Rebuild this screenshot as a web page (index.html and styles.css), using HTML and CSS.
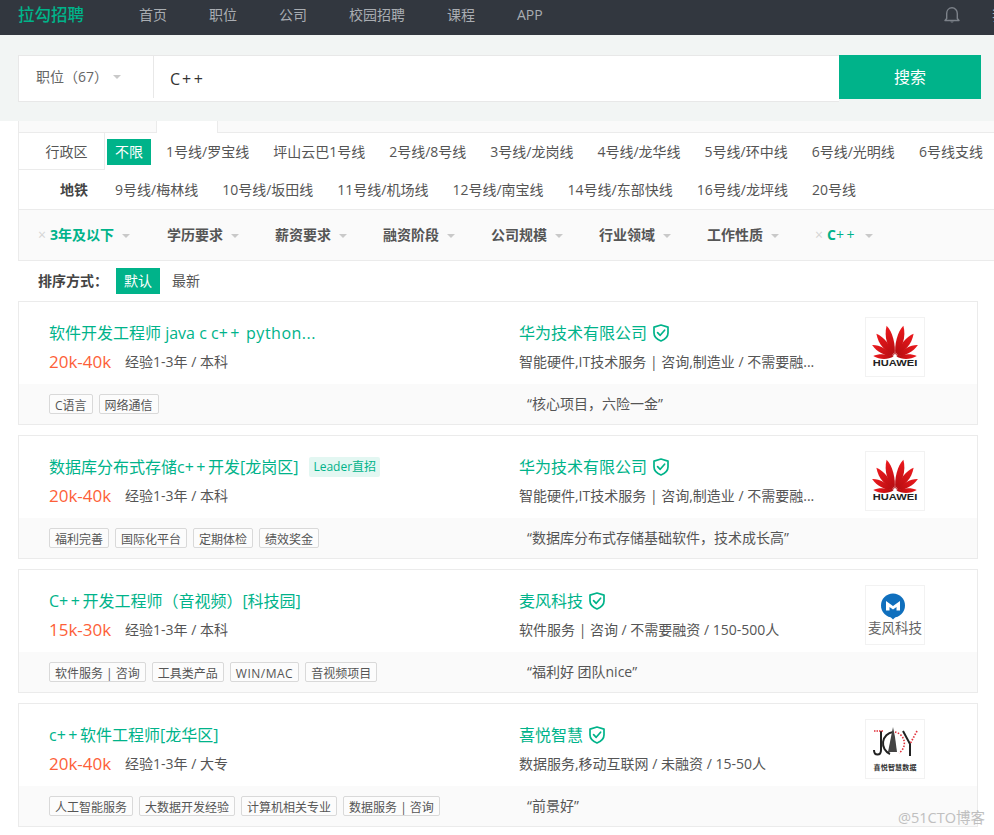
FILE: index.html
```html
<!DOCTYPE html>
<html lang="zh-CN">
<head>
<meta charset="utf-8">
<title>拉勾招聘</title>
<link rel="stylesheet" href="styles.css">
</head>
<body>
<svg class="sprites" width="0" height="0" aria-hidden="true">
  <defs>
    <linearGradient id="petal" x1="0" y1="0" x2="0" y2="1">
      <stop offset="0" stop-color="#ee1a1e"/>
      <stop offset="1" stop-color="#b30c10"/>
    </linearGradient>
    <symbol id="shield" viewBox="0 0 16 18">
      <path d="M8 1 15 3.100V9c0 3.600-2.800 6.300-7 8C3.800 15.300 1 12.600 1 9V3.100Z" fill="none" stroke="#00b38a" stroke-width="1.700" stroke-linejoin="round"/>
      <path d="M4.600 8.700 7.200 11.300 11.600 6.200" fill="none" stroke="#00b38a" stroke-width="1.700" stroke-linecap="round" stroke-linejoin="round"/>
    </symbol>
    <path id="leaf" d="M0-2C-6-10-8-22-3-33 2-26 3-12 0-2Z" fill="url(#petal)"/>
    <symbol id="huawei" viewBox="0 0 60 60">
      <g transform="translate(30 40)">
        <use href="#leaf" transform="rotate(-10)"/>
        <use href="#leaf" transform="rotate(-34) scale(.92)"/>
        <use href="#leaf" transform="rotate(-58) scale(.8)"/>
        <use href="#leaf" transform="rotate(-83) scale(.68)"/>
        <use href="#leaf" transform="scale(-1 1) rotate(-10)"/>
        <use href="#leaf" transform="scale(-1 1) rotate(-34) scale(.92)"/>
        <use href="#leaf" transform="scale(-1 1) rotate(-58) scale(.8)"/>
        <use href="#leaf" transform="scale(-1 1) rotate(-83) scale(.68)"/>
      </g>
      <text x="30" y="50" text-anchor="middle" font-family="Liberation Sans, sans-serif" font-weight="700" font-size="9.500" textLength="46" lengthAdjust="spacingAndGlyphs" fill="#222">HUAWEI</text>
    </symbol>
  </defs>
</svg>

<header class="topbar">
  <div class="brand">拉勾招聘</div>
  <nav class="nav">
    <span>首页</span><span>职位</span><span>公司</span><span>校园招聘</span><span>课程</span><span>APP</span>
  </nav>
  <svg class="bell" viewBox="0 0 16 18" width="16" height="18" aria-hidden="true">
    <path d="M1 14.500H15L13.300 12.500V7.500C13.300 4.200 11 1.800 8 1.800S2.700 4.200 2.700 7.500V12.500Z" fill="none" stroke="#7d828a" stroke-width="1.400" stroke-linejoin="round"/>
    <path d="M6.300 15.500C6.600 16.800 9.400 16.800 9.700 15.500Z" fill="#7d828a"/>
  </svg>
  <span class="me">我的</span>
</header>

<section class="search-band">
  <div class="search-box">
    <div class="search-type">职位（67）<i class="caret"></i></div>
    <div class="search-input">C<span class="pp">++</span></div>
  </div>
  <div class="search-btn">搜索</div>
</section>

<div class="tabs">
  <div class="tab"></div>
  <div class="tab tab-on"></div>
  <div class="tab-rest"></div>
</div>

<section class="area">
  <div class="area-row">
    <div class="area-label">行政区</div>
    <span class="chip">不限</span>
    <ul class="lines">
      <li>1号线/罗宝线</li><li>坪山云巴1号线</li><li>2号线/8号线</li><li>3号线/龙岗线</li><li>4号线/龙华线</li><li>5号线/环中线</li><li>6号线/光明线</li><li>6号线支线</li>
    </ul>
  </div>
  <div class="area-row area-row2">
    <div class="area-sub">地铁</div>
    <ul class="lines">
      <li>9号线/梅林线</li><li>10号线/坂田线</li><li>11号线/机场线</li><li>12号线/南宝线</li><li>14号线/东部快线</li><li>16号线/龙坪线</li><li>20号线</li>
    </ul>
  </div>
</section>

<section class="filters">
  <div class="filter filter-first on"><b class="x">×</b>3年及以下<i class="caret"></i></div>
  <div class="filter">学历要求<i class="caret"></i></div>
  <div class="filter">薪资要求<i class="caret"></i></div>
  <div class="filter">融资阶段<i class="caret"></i></div>
  <div class="filter">公司规模<i class="caret"></i></div>
  <div class="filter">行业领域<i class="caret"></i></div>
  <div class="filter">工作性质<i class="caret"></i></div>
  <div class="filter on"><b class="x">×</b>C<span class="pp">++</span><i class="caret"></i></div>
</section>

<section class="sort">
  <span class="sort-label">排序方式：</span>
  <span class="chip">默认</span>
  <span class="sort-new">最新</span>
</section>

<main class="list">
  <article class="card">
    <div class="card-top">
      <div class="job">
        <h3 class="title"><span>软件开发工程师 java c c<span class="pp">++</span> <span class="lat">python...</span></span></h3>
        <p class="meta"><span class="pay">20k-40k</span>经验1-3年 / 本科</p>
      </div>
      <div class="co">
        <h3 class="title">华为技术有限公司<svg class="shield" width="16" height="18"><use href="#shield"/></svg></h3>
        <p class="co-info">智能硬件,IT技术服务 | 咨询,制造业 / 不需要融...</p>
      </div>
      <div class="logo"><svg width="58" height="58"><use href="#huawei"/></svg></div>
    </div>
    <div class="card-bottom">
      <div class="tags"><span>C语言</span><span>网络通信</span></div>
      <div class="quote">“核心项目，六险一金”</div>
    </div>
  </article>

  <article class="card">
    <div class="card-top">
      <div class="job">
        <h3 class="title"><span>数据库分布式存储c<span class="pp">++</span>开发[龙岗区]</span><span class="badge">Leader直招</span></h3>
        <p class="meta"><span class="pay">20k-40k</span>经验1-3年 / 本科</p>
      </div>
      <div class="co">
        <h3 class="title">华为技术有限公司<svg class="shield" width="16" height="18"><use href="#shield"/></svg></h3>
        <p class="co-info">智能硬件,IT技术服务 | 咨询,制造业 / 不需要融...</p>
      </div>
      <div class="logo"><svg width="58" height="58"><use href="#huawei"/></svg></div>
    </div>
    <div class="card-bottom">
      <div class="tags"><span>福利完善</span><span>国际化平台</span><span>定期体检</span><span>绩效奖金</span></div>
      <div class="quote">“数据库分布式存储基础软件，技术成长高”</div>
    </div>
  </article>

  <article class="card">
    <div class="card-top">
      <div class="job">
        <h3 class="title"><span>C<span class="pp">++</span>开发工程师（音视频）[科技园]</span></h3>
        <p class="meta"><span class="pay">15k-30k</span>经验1-3年 / 本科</p>
      </div>
      <div class="co">
        <h3 class="title">麦风科技<svg class="shield" width="16" height="18"><use href="#shield"/></svg></h3>
        <p class="co-info">软件服务 | 咨询 / 不需要融资 / 150-500人</p>
      </div>
      <div class="logo">
        <svg width="58" height="58" viewBox="0 0 58 58" aria-hidden="true">
          <circle cx="27" cy="19.500" r="12" fill="#0f6fbd"/>
          <path d="M24.500 31 27 33.500 29.500 31Z" fill="#0f6fbd"/>
          <path d="M20 24.500V15L27 20 34 15V24.500H30.500V21L27 23.500 23.500 21V24.500Z" fill="#fff"/>
          <text x="29" y="47" text-anchor="middle" font-family="Noto Sans CJK SC, sans-serif" font-size="13.500" textLength="54" fill="#666">麦风科技</text>
        </svg>
      </div>
    </div>
    <div class="card-bottom">
      <div class="tags"><span>软件服务 | 咨询</span><span>工具类产品</span><span class="lat">WIN/MAC</span><span>音视频项目</span></div>
      <div class="quote">“福利好 团队nice”</div>
    </div>
  </article>

  <article class="card">
    <div class="card-top">
      <div class="job">
        <h3 class="title"><span>c<span class="pp">++</span>软件工程师[龙华区]</span></h3>
        <p class="meta"><span class="pay">20k-40k</span>经验1-3年 / 大专</p>
      </div>
      <div class="co">
        <h3 class="title">喜悦智慧<svg class="shield" width="16" height="18"><use href="#shield"/></svg></h3>
        <p class="co-info">数据服务,移动互联网 / 未融资 / 15-50人</p>
      </div>
      <div class="logo">
        <svg width="58" height="58" viewBox="0 0 58 58" aria-hidden="true">
          <path d="M15 11V30C15 36 8 36 8 30" fill="none" stroke="#222" stroke-width="2"/>
          <path d="M8 11H18" stroke="#e0303a" stroke-width="1.500" stroke-dasharray="1.500 1"/>
          <path d="M27 12A11.500 11.500 0 0 0 24 34" fill="none" stroke="#222" stroke-width="2"/>
          <path d="M29 12A11.500 11.500 0 0 1 33 33" fill="none" stroke="#e0303a" stroke-width="1.600" stroke-dasharray="1.500 1.500"/>
          <path d="M27 7 25 17 22 32H31L29 17Z" fill="#444"/>
          <path d="M37 11 44 24V36" stroke="#222" stroke-width="2" fill="none"/>
          <path d="M51 11 44 24" stroke="#e0303a" stroke-width="1.700" stroke-dasharray="1.500 1.500" fill="none"/>
          <text x="29" y="50" text-anchor="middle" font-family="Noto Sans CJK SC, sans-serif" font-weight="700" font-size="7" textLength="43" fill="#333">喜悦智慧数据</text>
        </svg>
      </div>
    </div>
    <div class="card-bottom">
      <div class="tags"><span>人工智能服务</span><span>大数据开发经验</span><span>计算机相关专业</span><span>数据服务 | 咨询</span></div>
      <div class="quote">“前景好”</div>
    </div>
  </article>
</main>

<div class="watermark">@51CTO博客</div>
</body>
</html>
```
FILE: styles.css
```css
* { box-sizing: border-box; }
html, body { margin: 0; padding: 0; }
body {
  position: relative;
  width: 994px;
  height: 835px;
  overflow: hidden;
  background: #fff;
  color: #555;
  font: 14px/22px "Open Sans", "Noto Sans CJK SC", sans-serif;
}
ul, h3, p { margin: 0; padding: 0; list-style: none; font-weight: 400; }
.sprites { position: absolute; }
.pp { letter-spacing: 2.500px; }
.lat { letter-spacing: .5px; }

.topbar {
  display: flex;
  align-items: center;
  height: 35px;
  padding: 0 0 5px 18px;
  background: #32373f;
  white-space: nowrap;
}
.brand { flex: none; width: 121px; color: #00b38a; font-size: 16.500px; font-weight: 500; }
.nav { flex: none; display: flex; gap: 42px; width: 805px; color: #a9adb2; font-size: 14px; }
.bell { flex: none; }
.me { flex: none; margin-left: 32px; color: #a9adb2; }

.search-band {
  display: flex;
  align-items: flex-start;
  height: 86px;
  padding: 20px 0 0 18px;
  background: #f2f5f4;
}
.search-box {
  display: flex;
  width: 821px;
  height: 47px;
  background: #fff;
  border: 1px solid #e8e8e8;
  border-right: 0;
}
.search-type {
  display: flex;
  align-items: center;
  width: 135px;
  height: 42px;
  padding-left: 17px;
  border-right: 1px solid #e8e8e8;
  color: #666;
}
.search-type .caret { margin-left: 5px; }
.search-input { padding: 12px 0 0 16px; color: #333; font-size: 16px; }
.search-input .pp { margin-left: 2px; letter-spacing: 2.500px; }
.search-btn {
  width: 142px;
  height: 44px;
  background: #00b38a;
  color: #fff;
  font-size: 16px;
  line-height: 44px;
  text-align: center;
}
.caret {
  display: inline-block;
  width: 0;
  height: 0;
  margin-left: 8px;
  vertical-align: middle;
  border: 4px solid transparent;
  border-top: 4px solid #c9c9c9;
  border-bottom: 0;
}

.tabs { display: flex; height: 12px; margin-left: 18px; }
.tab { width: 139px; background: #fafafa; border: 1px solid #ebebeb; border-top: 0; }
.tab-on { width: 61px; background: #fff; border-width: 0 1px 0 0; }
.tab-rest { flex: 1; background: #fafafa; border-bottom: 1px solid #ebebeb; }

.area { margin-left: 18px; border-left: 1px solid #ebebeb; }
.area-row { display: flex; align-items: flex-start; white-space: nowrap; }
.area-label {
  width: 86px;
  height: 37px;
  padding-left: 10px;
  border-right: 1px solid #ebebeb;
  border-bottom: 1px solid #ebebeb;
  line-height: 37px;
  text-align: center;
}
.chip {
  display: inline-block;
  width: 44px;
  height: 26px;
  background: #00b38a;
  color: #fff;
  line-height: 26px;
  text-align: center;
}
.area-row > .chip { margin: 6px 15px 0 2px; }
.lines { display: flex; gap: 24px; padding-top: 8px; }
.area-row2 { height: 40px; border-bottom: 1px solid #ebebeb; }
.area-row2 .lines { padding-top: 9px; }
.area-sub { width: 96px; padding: 9px 0 0 41px; color: #444; font-weight: 700; }

.filters {
  display: flex;
  align-items: center;
  height: 51px;
  margin-left: 18px;
  padding-left: 19px;
  background: #fafafa;
  border-left: 1px solid #ebebeb;
  border-bottom: 1px solid #ebebeb;
  white-space: nowrap;
}
.filter { flex: none; width: 108px; color: #555; font-weight: 700; }
.filter-first { width: 129px; }
.filter.on { color: #00b38a; }
.filter .pp { font-weight: 400; }
.x { margin-right: 4px; color: #d5d5d5; font-weight: 400; }

.sort { display: flex; align-items: center; height: 40px; padding: 0 0 0 38px; }
.sort-label { width: 78px; color: #444; font-weight: 700; }
.sort-new { margin-left: 12px; }

.list { display: flex; flex-direction: column; gap: 10px; width: 960px; margin-left: 18px; }
.card { height: 124px; border: 1px solid #ebebeb; }
.card-top { display: flex; height: 82px; padding-top: 19px; }
.job { width: 470px; margin-left: 30px; }
.title {
  display: flex;
  align-items: center;
  height: 24px;
  color: #00b38a;
  font-size: 16px;
  line-height: 24px;
  white-space: nowrap;
}
.badge {
  margin-left: 11px;
  padding: 0 4px;
  height: 20px;
  background: #e3f7f2;
  border-radius: 2px;
  font-size: 12px;
  line-height: 20px;
}
.meta { display: flex; align-items: center; height: 22px; margin-top: 6px; white-space: nowrap; }
.pay { width: 76px; color: #fd5f39; font-size: 17px; }
.co { width: 346px; }
.co-info { height: 22px; margin-top: 6px; white-space: nowrap; }
.shield { flex: none; margin-left: 6px; }
.logo {
  display: flex;
  width: 60px;
  height: 60px;
  margin-top: -4px;
  background: #fff;
  border: 1px solid #f2f2f2;
}

.card-bottom { display: flex; height: 40px; padding-top: 9px; background: #fafafa; }
.tags { display: flex; gap: 6px; width: 478px; margin: 1px 0 0 30px; }
.tags span {
  height: 20px;
  padding: 1px 5px 0;
  background: #fcfcfc;
  border: 1px solid #d9d9d9;
  border-radius: 2px;
  font-size: 12px;
  line-height: 20px;
  white-space: nowrap;
}
.quote { white-space: nowrap; }

.watermark {
  position: absolute;
  top: 808px;
  left: 898px;
  color: #b5b5b5;
  font-size: 14.500px;
  line-height: 20px;
  opacity: .85;
}
```
